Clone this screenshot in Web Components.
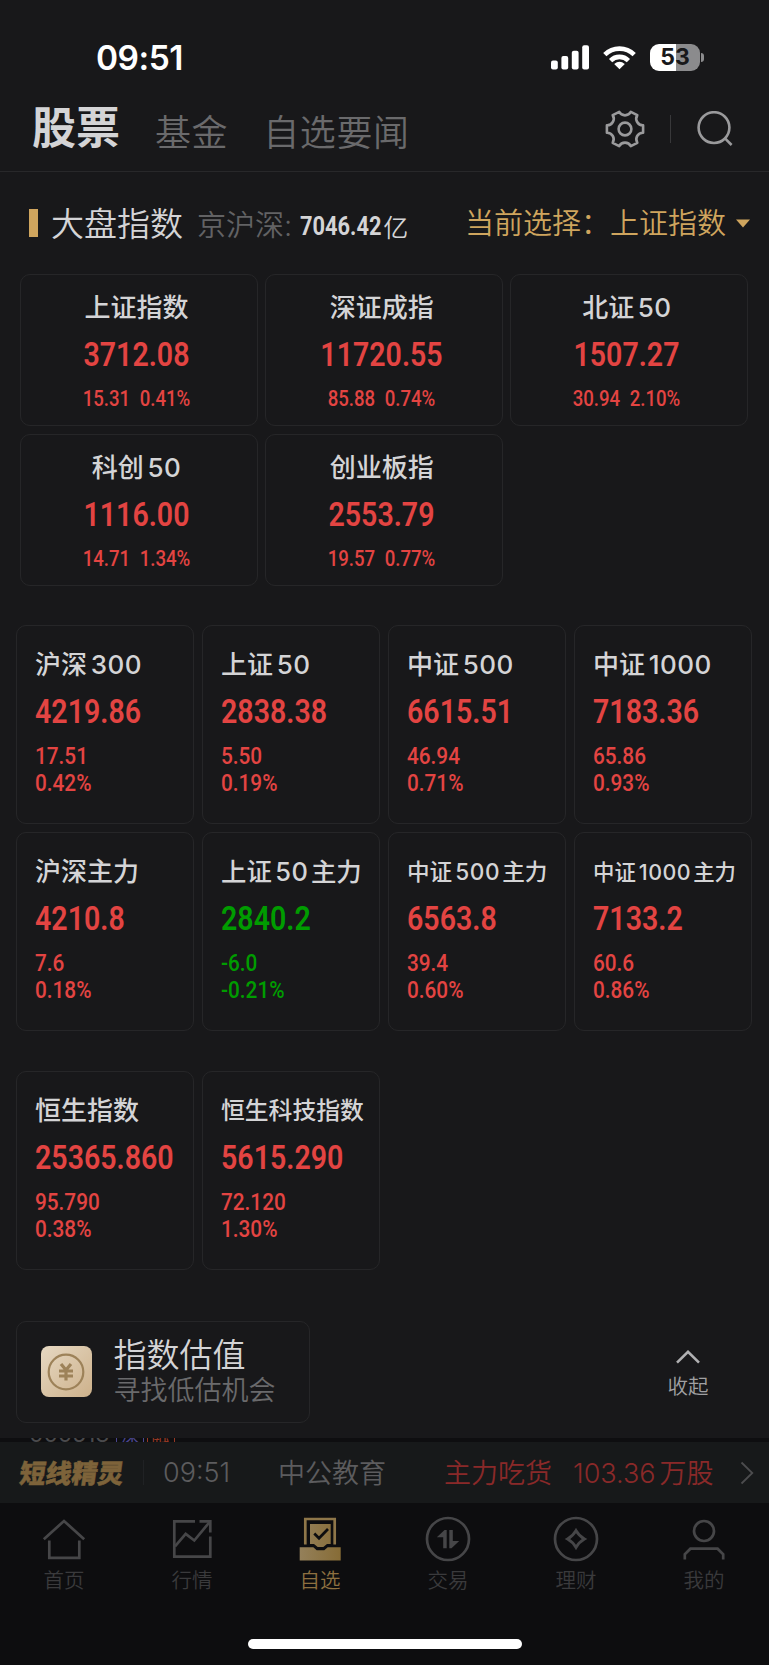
<!DOCTYPE html>
<html lang="zh-CN">
<head>
<meta charset="utf-8">
<title>自选</title>
<style>
  body {
    margin: 0;
    background: #18181a;
    color: #d4d4d6;
    font-family: Inter, "Noto Sans CJK SC", sans-serif;
  }
</style>
</head>
<body>
<market-app></market-app>

<script>
// Keep margin and padding out of this rule: it would win over a child's :host.
const RESET = `
  * { box-sizing: border-box; }
  svg { display: block; flex: none; }
`;

class BaseElement extends HTMLElement {
  constructor() {
    super();
    this.attachShadow({ mode: 'open' });
  }

  connectedCallback() {
    this.shadowRoot.innerHTML = `<style>${RESET}${this.styles()}</style>${this.markup()}`;
  }
}

class StatusBar extends BaseElement {
  styles() {
    return `
      :host {
        display: flex;
        align-items: center;
        height: 94px;
        padding: 20px 65px 0 96px;
        color: #fff;
      }
      .time {
        flex: 1;
        padding-top: 2px;
        font-size: 33.5px;
        font-weight: 600;
        letter-spacing: -.5px;
      }
      .signal { margin-right: 14px; }
      .wifi { margin-right: 14px; }
      .battery {
        width: 50px;
        height: 27px;
        border-radius: 9px;
        background: linear-gradient(90deg, #fff 53%, #8b8b8d 53%);
        color: #18181a;
        font-size: 23px;
        font-weight: 700;
        line-height: 27px;
        text-align: center;
      }
      .knob {
        width: 3px;
        height: 9px;
        margin-left: 1px;
        border-radius: 0 4px 4px 0;
        background: #8b8b8d;
      }
    `;
  }

  markup() {
    return `
      <span class="time">09:51</span>
      <svg class="signal" width="38" height="25" fill="#fff">
        <rect x="0" y="15.5" width="6.8" height="9" rx="2"/>
        <rect x="10.4" y="11" width="6.8" height="13.5" rx="2"/>
        <rect x="20.8" y="5.8" width="6.8" height="18.7" rx="2"/>
        <rect x="31.2" y="0.3" width="6.8" height="24.2" rx="2"/>
      </svg>
      <svg class="wifi" width="33" height="25" fill="none" stroke="#fff" stroke-width="4.6">
        <path d="M1.8 9.7 A20.8 20.8 0 0 1 31.2 9.7"/>
        <path d="M7.6 15.6 A12.6 12.6 0 0 1 25.4 15.6"/>
        <path d="M16.5 24.3 L11.2 18.9 Q16.5 14.6 21.8 18.9Z" fill="#fff" stroke="none"/>
      </svg>
      <div class="battery">53</div>
      <div class="knob"></div>
    `;
  }
}

class PageHeader extends BaseElement {
  styles() {
    return `
      :host {
        display: flex;
        align-items: center;
        height: 78px;
        padding: 0 36px 8px 32px;
        border-bottom: 1px solid #28282a;
      }
      .tab {
        font-size: 36px;
        font-weight: 350;
        letter-spacing: .6px;
        line-height: 50px;
        color: #6a6a6c;
        white-space: nowrap;
        padding-top: 8px;
      }
      .tab.active {
        font-size: 44px;
        font-weight: 700;
        letter-spacing: 0;
        color: #d4d4d6;
        padding-top: 0;
        margin-bottom: 2px;
      }
      .fund { margin-left: 35px; }
      .news { margin-left: 35px; }
      .gear { margin-left: auto; }
      .divider {
        width: 1px;
        height: 28px;
        margin: 0 26px 0 25px;
        background: #38383a;
      }
    `;
  }

  markup() {
    return `
      <span class="tab active">股票</span>
      <span class="tab fund">基金</span>
      <span class="tab news">自选要闻</span>
      <svg class="gear" width="40" height="40" viewBox="-20 -20 40 40" fill="none" stroke="#9a9a9c" stroke-width="2.6" stroke-linejoin="round">
        <path d="M18.1 -3.7 L18.1 3.7 A6.6 6.6 0 0 0 12.3 13.8 L5.8 17.1 A6.6 6.6 0 0 0 -5.8 17.1 L-12.3 13.8 A6.6 6.6 0 0 0 -18.1 3.7 L-18.1 -3.7 A6.6 6.6 0 0 0 -12.3 -13.8 L-5.8 -17.1 A6.6 6.6 0 0 0 5.8 -17.1 L12.3 -13.8 A6.6 6.6 0 0 0 18.1 -3.7Z"/>
        <circle r="6.4"/>
      </svg>
      <div class="divider"></div>
      <svg width="36" height="36" fill="none" stroke="#9a9a9c" stroke-width="2.6">
        <circle cx="17" cy="16.6" r="15.4"/>
        <path d="M28 27.4 L34.6 34"/>
      </svg>
    `;
  }
}

class MarketHeading extends BaseElement {
  styles() {
    return `
      :host {
        display: flex;
        align-items: center;
        height: 102px;
        padding: 0 19px 0 29px;
        white-space: nowrap;
        font-weight: 350;
      }
      .mark {
        width: 9px;
        height: 28px;
        background: #cfa55e;
      }
      .title {
        margin-left: 13px;
        padding-bottom: 3px;
        font-size: 33px;
      }
      .label {
        margin-left: 14px;
        font-size: 29px;
        color: #626264;
      }
      .amount {
        display: flex;
        align-items: center;
        margin-left: 8px;
        padding-top: 5px;
        font-size: 25px;
      }
      .figure {
        width: 83px;
        font: 700 26px Roboto, sans-serif;
        transform: scaleX(.84);
        transform-origin: left;
      }
      .pick {
        display: flex;
        align-items: center;
        margin-left: auto;
        font-size: 29px;
        color: #cfa55e;
        padding-bottom: 5px;
      }
      .pick svg { margin-left: 10px; margin-top: 5px; }
    `;
  }

  markup() {
    return `
      <div class="mark"></div>
      <span class="title">大盘指数</span>
      <span class="label">京沪深:</span>
      <div class="amount"><span class="figure">7046.42</span><span>亿</span></div>
      <div class="pick">
        <span>当前选择：</span>
        <span>上证指数</span>
        <svg width="14" height="9" fill="#cfa55e"><path d="M0 0.5 H14 L7 8.5Z"/></svg>
      </div>
    `;
  }
}

// One quote tile. "wide" centres its text and keeps both changes on one line.
class IndexCard extends BaseElement {
  styles() {
    const size = this.getAttribute('size') || 26;
    return `
      :host {
        display: block;
        height: 199px;
        padding: 21px 0 0 18px;
        border: 1px solid #262628;
        border-radius: 10px;
        white-space: nowrap;
        color: #e34442;
      }
      :host([down]) { color: #009c00; }
      .name {
        height: 36px;
        font-size: ${size}px;
        font-weight: 500;
        line-height: 36px;
        color: #d4d4d6;
      }
      .name i {
        margin-left: .14em;
        font-style: normal;
        letter-spacing: .5px;
      }
      .name i:not(.last) { margin-right: .1em; }
      .value, .changes {
        font-family: Roboto, sans-serif;
        font-weight: 500;
        transform-origin: left;
      }
      .value {
        margin-top: 8px;
        font-size: 34px;
        font-weight: 600;
        line-height: 40px;
        transform: scaleX(.84);
      }
      .changes {
        margin-top: 12px;
        font-size: 24px;
        line-height: 27px;
        transform: scaleX(.865);
      }
      .changes span { display: block; }
      :host([wide]) {
        height: 152px;
        padding: 15px 5px 0 0;
        text-align: center;
      }
      :host([wide]) .value, :host([wide]) .changes { transform-origin: center; }
      :host([wide]) .changes {
        display: flex;
        justify-content: center;
        gap: 11px;
        margin-top: 13px;
        font-size: 21.5px;
        line-height: 24px;
      }
    `;
  }

  markup() {
    const name = this.getAttribute('name').replace(/\d+/, (digits, at, all) =>
      `<i class="${at + digits.length === all.length ? 'last' : ''}">${digits}</i>`);
    return `
      <div class="name">${name}</div>
      <div class="value">${this.getAttribute('value')}</div>
      <div class="changes">
        <span>${this.getAttribute('change')}</span>
        <span>${this.getAttribute('percent')}</span>
      </div>
    `;
  }
}

class CardGrid extends BaseElement {
  styles() {
    return `
      :host {
        display: grid;
        grid-template-columns: repeat(4, 178px);
        gap: 8px;
        margin: 39px 0 0 16px;
      }
      :host([wide]) {
        grid-template-columns: repeat(3, 238px);
        column-gap: 7.2px;
        margin: 0 0 0 20px;
      }
    `;
  }

  markup() {
    return '<slot></slot>';
  }
}

class ValuationRow extends BaseElement {
  styles() {
    return `
      :host {
        display: flex;
        align-items: flex-start;
        justify-content: space-between;
        height: 168px;
        padding: 51px 60px 0 15.5px;
        font-weight: 350;
      }
      .entry {
        display: flex;
        align-items: center;
        width: 294px;
        height: 102px;
        padding-left: 24px;
        border: 1px solid #262628;
        border-radius: 10px;
      }
      .coin {
        display: flex;
        align-items: center;
        justify-content: center;
        width: 51px;
        height: 51px;
        margin-bottom: 1px;
        border-radius: 8px;
        background: linear-gradient(135deg, #e6d8c2, #cdb18b);
      }
      .text { margin-left: 22px; }
      .title { font-size: 33px; line-height: 36px; }
      .hint { font-size: 27px; line-height: 35px; color: #6a6a6c; }
      .fold {
        display: flex;
        flex-direction: column;
        align-items: center;
        padding-top: 29px;
        width: 42px;
        font-size: 20.5px;
        line-height: 28px;
        color: #a0a0a2;
        white-space: nowrap;
      }
      .fold svg { margin-bottom: 9px; }
    `;
  }

  markup() {
    return `
      <div class="entry">
        <div class="coin">
          <svg width="38" height="38" viewBox="-19 -19 38 38" fill="none" stroke="#9d8259">
            <circle r="17.3" stroke-width="2.2"/>
            <path d="M-5 -8 L0 -2 L5 -8 M0 -2 V8.5 M-7 -1 H7 M-7 4 H7" stroke-width="3.2"/>
          </svg>
        </div>
        <div class="text">
          <div class="title">指数估值</div>
          <div class="hint">寻找低估机会</div>
        </div>
      </div>
      <div class="fold">
        <svg width="24" height="14" fill="none" stroke="#b0b0b2" stroke-width="2.6"><path d="M1 12.6 L12 1.8 L23 12.6"/></svg>
        <span>收起</span>
      </div>
    `;
  }
}

// Bottom edge of the quote list that scrolls under the panel above.
class ListPeek extends BaseElement {
  styles() {
    return `
      :host {
        display: flex;
        align-items: flex-end;
        height: 4px;
        padding-left: 29px;
        overflow: hidden;
        background: #0e0e10;
        color: #4a4a4c;
      }
      .code {
        width: 87px;
        font-size: 23px;
        line-height: 22px;
        letter-spacing: -.1px;
        margin-bottom: -3px;
      }
      .tag {
        width: 28px;
        height: 24px;
        margin: 0 2.5px -6px 0;
        border: 1px solid;
        font-size: 18px;
        line-height: 22px;
        text-align: center;
        color: #4b4690;
      }
      .tag.margin { color: #963824; }
    `;
  }

  markup() {
    return `
      <span class="code">000513</span>
      <span class="tag">深</span>
      <span class="tag margin">融</span>
    `;
  }
}

class NewsTicker extends BaseElement {
  styles() {
    return `
      :host {
        display: flex;
        align-items: center;
        height: 61px;
        padding: 0 15px 0 20px;
        background: #17191a;
        font-size: 27px;
        font-weight: 350;
        color: #5c5c5e;
        white-space: nowrap;
      }
      .brand, .stock, .red { padding-bottom: 2px; }
      .brand {
        width: 123px;
        font-size: 26px;
        font-weight: 900;
        color: #7d633a;
        -webkit-text-stroke: .5px;
        transform: skewX(-8deg);
      }
      .divider {
        width: 1px;
        height: 25px;
        background: #202224;
      }
      .time { width: 115px; margin-left: 19px; }
      .stock { width: 166px; }
      .red { color: #8a2929; }
      .action { width: 129px; }
      .unit { margin-left: 4px; }
      svg { margin-left: auto; }
    `;
  }

  markup() {
    return `
      <span class="brand">短线精灵</span>
      <div class="divider"></div>
      <span class="time">09:51</span>
      <span class="stock">中公教育</span>
      <span class="red action">主力吃货</span>
      <span class="red">103.36<span class="unit">万股</span></span>
      <svg width="14" height="24" fill="none" stroke="#4c4c4e" stroke-width="1.8"><path d="M1.5 1.5 L12.3 12 L1.5 22.5"/></svg>
    `;
  }
}

const TAB_ICONS = {
  home: '<path d="M3.8 24.2 L24 6 L44.2 24.2"/><path d="M9.3 25.5 V42.9 H39.3 V25.5"/>',
  chart: '<path d="M27 6.3 H6.3 V41.7 H42.3 V21.6"/><path d="M7 31.3 L17.7 18.9 L26.3 25.5 L41.6 7"/><path d="M31.5 6.3 H42.3 V17.6"/>',
  watch: `
    <defs><linearGradient id="gold"><stop stop-color="#94805a"/><stop offset="1" stop-color="#876c36"/></linearGradient></defs>
    <path d="M9.3 29.5 V4 H38.7 V29.5" stroke="#8e7649"/>
    <path d="M14 9 H34.7 V29 H31 L27.3 32 H21.7 L18 29 H14Z M3.7 32.3 H17.3 L20.7 35.3 H28.3 L31.7 32.3 H44.7 V45.5 H3.7Z" fill="url(#gold)" stroke="none"/>
    <path d="M18.3 18.5 L23 23.3 L32 14" stroke="#0d0d0f"/>`,
  trade: '<circle cx="24" cy="24" r="21"/><path d="M12.8 22.3 L20.5 15 H22.7 V33.3 H19.2 V22.3Z M35.2 26 L27.5 33.3 H25.3 V15 H28.8 V26Z" fill="#464648" stroke="none"/>',
  wealth: '<circle cx="24" cy="24" r="21"/><path d="M24 15.5 Q27 21 32.5 24 Q27 27 24 32.5 Q21 27 15.5 24 Q21 21 24 15.5Z"/>',
  mine: '<circle cx="24" cy="16" r="10"/><path d="M4.8 44.6 V39.2 L10.4 33.7 H37.6 L43.2 39.2 V44.6"/>'
};

class TabItem extends BaseElement {
  styles() {
    return `
      :host {
        display: flex;
        flex-direction: column;
        align-items: center;
        width: 128px;
        font-size: 20.5px;
        font-weight: 350;
        line-height: 28px;
        color: #3a3a3c;
      }
      :host([active]) { color: #8d7040; }
      span { margin-top: 4px; }
    `;
  }

  markup() {
    return `
      <svg width="48" height="48" fill="none" stroke="#464648" stroke-width="2.7">${TAB_ICONS[this.getAttribute('icon')]}</svg>
      <span><slot></slot></span>
    `;
  }
}

class TabBar extends BaseElement {
  styles() {
    return `
      :host {
        display: block;
        height: 162px;
        padding-top: 12px;
        background: #0d0d0f;
      }
      .items { display: flex; height: 124px; }
      .indicator {
        width: 274px;
        height: 10px;
        margin: 0 auto;
        border-radius: 5px;
        background: #fff;
      }
    `;
  }

  markup() {
    return `
      <div class="items"><slot></slot></div>
      <div class="indicator"></div>
    `;
  }
}

class MarketApp extends BaseElement {
  styles() {
    return `
      :host {
        display: block;
        width: 769px;
        height: 1665px;
        overflow: hidden;
      }
      .overseas { margin-top: 40px; }
    `;
  }

  markup() {
    return `
      <status-bar></status-bar>
      <page-header></page-header>
      <market-heading></market-heading>
      <card-grid wide>
        <index-card wide name="上证指数" value="3712.08" change="15.31" percent="0.41%"></index-card>
        <index-card wide name="深证成指" value="11720.55" change="85.88" percent="0.74%"></index-card>
        <index-card wide name="北证50" value="1507.27" change="30.94" percent="2.10%"></index-card>
        <index-card wide name="科创50" value="1116.00" change="14.71" percent="1.34%"></index-card>
        <index-card wide name="创业板指" value="2553.79" change="19.57" percent="0.77%"></index-card>
      </card-grid>
      <card-grid>
        <index-card name="沪深300" value="4219.86" change="17.51" percent="0.42%"></index-card>
        <index-card name="上证50" value="2838.38" change="5.50" percent="0.19%"></index-card>
        <index-card name="中证500" value="6615.51" change="46.94" percent="0.71%"></index-card>
        <index-card name="中证1000" value="7183.36" change="65.86" percent="0.93%"></index-card>
        <index-card name="沪深主力" value="4210.8" change="7.6" percent="0.18%"></index-card>
        <index-card down name="上证50主力" size="25.4" value="2840.2" change="-6.0" percent="-0.21%"></index-card>
        <index-card name="中证500主力" size="22.6" value="6563.8" change="39.4" percent="0.60%"></index-card>
        <index-card name="中证1000主力" size="21.4" value="7133.2" change="60.6" percent="0.86%"></index-card>
      </card-grid>
      <card-grid class="overseas">
        <index-card name="恒生指数" value="25365.860" change="95.790" percent="0.38%"></index-card>
        <index-card name="恒生科技指数" size="23.8" value="5615.290" change="72.120" percent="1.30%"></index-card>
      </card-grid>
      <valuation-row></valuation-row>
      <list-peek></list-peek>
      <news-ticker></news-ticker>
      <tab-bar>
        <tab-item icon="home">首页</tab-item>
        <tab-item icon="chart">行情</tab-item>
        <tab-item icon="watch" active>自选</tab-item>
        <tab-item icon="trade">交易</tab-item>
        <tab-item icon="wealth">理财</tab-item>
        <tab-item icon="mine">我的</tab-item>
      </tab-bar>
    `;
  }
}

customElements.define('status-bar', StatusBar);
customElements.define('page-header', PageHeader);
customElements.define('market-heading', MarketHeading);
customElements.define('index-card', IndexCard);
customElements.define('card-grid', CardGrid);
customElements.define('valuation-row', ValuationRow);
customElements.define('list-peek', ListPeek);
customElements.define('news-ticker', NewsTicker);
customElements.define('tab-item', TabItem);
customElements.define('tab-bar', TabBar);
customElements.define('market-app', MarketApp);
</script>
</body>
</html>
